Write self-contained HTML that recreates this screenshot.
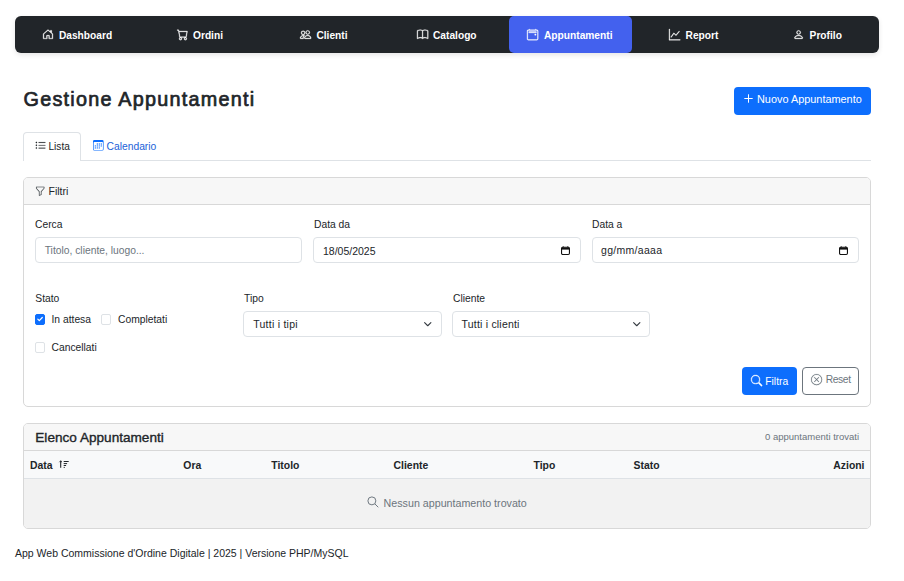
<!DOCTYPE html>
<html><head><meta charset="utf-8">
<style>
*{box-sizing:border-box;margin:0;padding:0}
html,body{width:904px;height:581px;overflow:hidden;background:#fff;font-family:"Liberation Sans",sans-serif;color:#212529}
.a{position:absolute}
.t{position:absolute;white-space:nowrap;line-height:1}
svg{position:absolute;overflow:visible}
#nav{left:15px;top:16px;width:864px;height:37px;background:#212529;border-radius:6px;box-shadow:0 2px 5px rgba(0,0,0,.1)}
#act{left:509px;top:16px;width:123px;height:37px;background:#4361ee;border-radius:5px}
.nt{font-weight:bold;font-size:10.2px;color:#fff}
.card{position:absolute;border:1px solid #d8d8d8;border-radius:5px;overflow:hidden;background:#fff}
.ch{position:absolute;left:0;right:0;top:0;background:#f7f7f7;border-bottom:1px solid #d8d8d8}
.inp{position:absolute;border:1px solid #dee2e6;border-radius:4px;background:#fff;height:26px;top:237px}
.lb{font-size:10.3px;color:#212529}
.cb{position:absolute;width:10.3px;height:10.6px;border:1px solid #dee2e6;border-radius:2px;background:#fff}
.th{font-weight:bold;font-size:10.4px;color:#212529}
</style></head><body>
<div id="nav" class="a"></div>
<div id="act" class="a"></div>

<!-- nav icons -->
<svg style="left:41.8px;top:29.2px" width="12" height="10.5" preserveAspectRatio="none" viewBox="0 0 16 16" fill="#fff" stroke="#fff" stroke-width="0.45"><path d="M8.354 1.146a.5.5 0 0 0-.708 0l-6 6A.5.5 0 0 0 1.5 7.5v7a.5.5 0 0 0 .5.5h4.5a.5.5 0 0 0 .5-.5v-4h2v4a.5.5 0 0 0 .5.5H14a.5.5 0 0 0 .5-.5v-7a.5.5 0 0 0-.146-.354L13 5.793V2.5a.5.5 0 0 0-.5-.5h-1a.5.5 0 0 0-.5.5v1.293zM2.5 14V7.707l5.5-5.5 5.5 5.5V14H10v-4a.5.5 0 0 0-.5-.5h-3a.5.5 0 0 0-.5.5v4z"/></svg>
<div class="t nt" style="left:58.9px;top:31.4px">Dashboard</div>
<svg style="left:177px;top:29.2px" width="11.2" height="11.2" viewBox="0 0 16 16" fill="#fff" stroke="#fff" stroke-width="0.45"><path d="M0 1.5A.5.5 0 0 1 .5 1H2a.5.5 0 0 1 .485.379L2.89 3H14.5a.5.5 0 0 1 .491.592l-1.5 8A.5.5 0 0 1 13 12H4a.5.5 0 0 1-.491-.408L2.01 3.607 1.61 2H.5a.5.5 0 0 1-.5-.5M3.102 4l1.313 7h8.17l1.313-7zM5 12a2 2 0 1 0 0 4 2 2 0 0 0 0-4m7 0a2 2 0 1 0 0 4 2 2 0 0 0 0-4m-7 1a1 1 0 1 1 0 2 1 1 0 0 1 0-2m7 0a1 1 0 1 1 0 2 1 1 0 0 1 0-2"/></svg>
<div class="t nt" style="left:193px;top:31.4px">Ordini</div>
<svg style="left:300px;top:29.2px" width="11.2" height="11.2" viewBox="0 0 16 16" fill="#fff" stroke="#fff" stroke-width="0.45"><path d="M15 14s1 0 1-1-1-4-5-4-5 3-5 4 1 1 1 1zm-7.978-1L7 12.996c.001-.264.167-1.03.76-1.72C8.312 10.629 9.282 10 11 10c1.717 0 2.687.63 3.24 1.276.593.69.758 1.457.76 1.72l-.008.002-.014.002zM11 7a2 2 0 1 0 0-4 2 2 0 0 0 0 4m3-2a3 3 0 1 1-6 0 3 3 0 0 1 6 0M6.936 9.28a6 6 0 0 0-1.23-.247A7 7 0 0 0 5 9c-4 0-5 3-5 4q0 1 1 1h4.216A2.240 2.240 0 0 1 5 13c0-1.010.377-2.042 1.090-2.904.243-.294.526-.569.846-.816M4.920 10A5.500 5.500 0 0 0 4 13H1c0-.260.164-1.030.760-1.724.545-.636 1.492-1.256 3.160-1.275zM1.500 5.500a3 3 0 1 1 6 0 3 3 0 0 1-6 0m3-2a2 2 0 1 0 0 4 2 2 0 0 0 0-4"/></svg>
<div class="t nt" style="left:316.4px;top:31.4px">Clienti</div>
<svg style="left:417px;top:29.2px" width="11.2" height="11.2" viewBox="0 0 16 16" fill="#fff" stroke="#fff" stroke-width="0.45"><path d="M1 2.828c.885-.37 2.154-.769 3.388-.893 1.33-.134 2.458.063 3.112.752v9.746c-.935-.53-2.12-.603-3.213-.493-1.18.12-2.37.461-3.287.811zm7.5-.141c.654-.689 1.782-.886 3.112-.752 1.234.124 2.503.523 3.388.893v9.923c-.918-.35-2.107-.692-3.287-.81-1.094-.111-2.278-.039-3.213.492zM8 1.783C7.015.936 5.587.81 4.287.94c-1.514.153-3.042.672-3.994 1.105A.5.5 0 0 0 0 2.5v11a.5.5 0 0 0 .707.455c.882-.4 2.303-.881 3.68-1.02 1.409-.142 2.59.087 3.223.877a.5.5 0 0 0 .78 0c.633-.79 1.814-1.019 3.222-.877 1.378.139 2.8.62 3.681 1.02A.5.5 0 0 0 16 13.5v-11a.5.5 0 0 0-.293-.455c-.952-.433-2.48-.952-3.994-1.105C10.413.809 8.985.936 8 1.783"/></svg>
<div class="t nt" style="left:433px;top:31.4px">Catalogo</div>
<svg style="left:527px;top:29.2px" width="11.2" height="11.2" viewBox="0 0 16 16" fill="#fff" stroke="#fff" stroke-width="0.45"><path d="M11 7.5a.5.5 0 0 1 .5-.5h1a.5.5 0 0 1 .5.5v1a.5.5 0 0 1-.5.5h-1a.5.5 0 0 1-.5-.5zM3.5 0a.5.5 0 0 1 .5.5V1h8V.5a.5.5 0 0 1 1 0V1h1a2 2 0 0 1 2 2v11a2 2 0 0 1-2 2H2a2 2 0 0 1-2-2V3a2 2 0 0 1 2-2h1V.5a.5.5 0 0 1 .5-.5M2 2a1 1 0 0 0-1 1v11a1 1 0 0 0 1 1h12a1 1 0 0 0 1-1V3a1 1 0 0 0-1-1zM2.5 4a.5.5 0 0 1 .5-.5h10a.5.5 0 0 1 .5.5v1a.5.5 0 0 1-.5.5H3a.5.5 0 0 1-.5-.5z"/></svg>
<div class="t nt" style="left:544px;top:31.4px">Appuntamenti</div>
<svg style="left:669px;top:29.2px" width="11.2" height="11.2" viewBox="0 0 16 16" fill="#fff" stroke="#fff" stroke-width="0.45"><path d="M0 0h1v15h15v1H0zm14.817 3.113a.5.5 0 0 1 .07.704l-4.5 5.5a.5.5 0 0 1-.74.037L7.06 6.767l-3.656 5.027a.5.5 0 0 1-.808-.588l4-5.5a.5.5 0 0 1 .758-.06l2.609 2.61 4.15-5.073a.5.5 0 0 1 .704-.07"/></svg>
<div class="t nt" style="left:685.6px;top:31.4px">Report</div>
<svg style="left:793px;top:29.2px" width="11.2" height="11.2" viewBox="0 0 16 16" fill="#fff" stroke="#fff" stroke-width="0.45"><path d="M8 8a3 3 0 1 0 0-6 3 3 0 0 0 0 6m2-3a2 2 0 1 1-4 0 2 2 0 0 1 4 0m4 8c0 1-1 1-1 1H3s-1 0-1-1 1-4 6-4 6 3 6 4m-1-.004c-.001-.246-.154-.986-.832-1.664C11.516 10.68 10.289 10 8 10s-3.516.68-4.168 1.332c-.678.678-.83 1.418-.832 1.664z"/></svg>
<div class="t nt" style="left:809.6px;top:31.4px">Profilo</div>

<!-- title -->
<div class="t" style="left:23.5px;top:89.5px;font-size:19.8px;letter-spacing:1.25px;-webkit-text-stroke:0.7px #212529;color:#212529">Gestione Appuntamenti</div>

<!-- Nuovo button -->
<div class="a" style="left:734px;top:87px;width:137px;height:28px;background:#0d6efd;border-radius:4px"></div>
<svg style="left:744px;top:94px" width="9" height="9" viewBox="0 0 9 9" fill="none" stroke="#fff" stroke-width="1"><path d="M4.5 0.3v8.4M0.3 4.5h8.4"/></svg>
<div class="t" style="left:757px;top:93.7px;font-size:10.9px;color:#fff">Nuovo Appuntamento</div>

<!-- tabs -->
<div class="a" style="left:23px;top:160px;width:848px;height:1px;background:#dee2e6"></div>
<div class="a" style="left:23px;top:132px;width:58px;height:29px;border:1px solid #dee2e6;border-bottom:none;border-radius:4px 4px 0 0;background:#fff"></div>
<svg style="left:34.7px;top:140.4px" width="11.2" height="11.2" viewBox="0 0 16 16" fill="#212529" stroke="#212529" stroke-width="0.2"><path d="M5 11.5a.5.5 0 0 1 .5-.5h9a.5.5 0 0 1 0 1h-9a.5.5 0 0 1-.5-.5m0-4a.5.5 0 0 1 .5-.5h9a.5.5 0 0 1 0 1h-9a.5.5 0 0 1-.5-.5m0-4a.5.5 0 0 1 .5-.5h9a.5.5 0 0 1 0 1h-9a.5.5 0 0 1-.5-.5m-3 1a1 1 0 1 0 0-2 1 1 0 0 0 0 2m0 4a1 1 0 1 0 0-2 1 1 0 0 0 0 2m0 4a1 1 0 1 0 0-2 1 1 0 0 0 0 2"/></svg>
<div class="t lb" style="left:48.5px;top:142.2px;font-size:10.1px;color:#212529">Lista</div>
<svg style="left:93px;top:140px" width="10.6" height="10.6" viewBox="0 0 16 16" fill="#0d6efd"><path d="M14 0H2a2 2 0 0 0-2 2v12a2 2 0 0 0 2 2h12a2 2 0 0 0 2-2V2a2 2 0 0 0-2-2M1 3.857C1 3.384 1.448 3 2 3h12c.552 0 1 .384 1 .857v10.286c0 .473-.448.857-1 .857H2c-.552 0-1-.384-1-.857zM6.5 7a1 1 0 1 0 0-2 1 1 0 0 0 0 2m3 0a1 1 0 1 0 0-2 1 1 0 0 0 0 2m3 0a1 1 0 1 0 0-2 1 1 0 0 0 0 2m-9 3a1 1 0 1 0 0-2 1 1 0 0 0 0 2m3 0a1 1 0 1 0 0-2 1 1 0 0 0 0 2m3 0a1 1 0 1 0 0-2 1 1 0 0 0 0 2m3 0a1 1 0 1 0 0-2 1 1 0 0 0 0 2m-9 3a1 1 0 1 0 0-2 1 1 0 0 0 0 2m3 0a1 1 0 1 0 0-2 1 1 0 0 0 0 2m3 0a1 1 0 1 0 0-2 1 1 0 0 0 0 2"/></svg>
<div class="t" style="left:106.5px;top:142.2px;font-size:10.3px;color:#2262d8">Calendario</div>

<!-- Filtri card -->
<div class="card" style="left:23px;top:177px;width:848px;height:230px">
  <div class="ch" style="height:27px"></div>
</div>
<svg style="left:35px;top:185.6px" width="10.4" height="10.4" viewBox="0 0 16 16" fill="#3a3f44" stroke="#3a3f44" stroke-width="0.1"><path d="M1.5 1.5A.5.5 0 0 1 2 1h12a.5.5 0 0 1 .5.5v2a.5.5 0 0 1-.128.334L10 8.692V13.5a.5.5 0 0 1-.342.474l-3 1A.5.5 0 0 1 6 14.5V8.692L1.628 3.834A.5.5 0 0 1 1.5 3.5zm1 .5v1.308l4.372 4.858A.5.5 0 0 1 7 8.5v5.306l2-.666V8.5a.5.5 0 0 1 .128-.334L13.5 3.308V2z"/></svg>
<div class="t lb" style="left:48.5px;top:186px;font-size:10.5px">Filtri</div>

<div class="t lb" style="left:35px;top:220.3px">Cerca</div>
<div class="t lb" style="left:314px;top:220.3px">Data da</div>
<div class="t lb" style="left:592px;top:220.3px">Data a</div>
<div class="inp" style="left:35px;width:267px"></div>
<div class="inp" style="left:313px;width:268px"></div>
<div class="inp" style="left:592px;width:267px"></div>
<div class="t" style="left:44.7px;top:246.3px;font-size:10.3px;color:#6c757d">Titolo, cliente, luogo...</div>
<div class="t" style="left:323px;top:245.8px;font-size:10.5px;color:#212529">18/05/2025</div>
<div class="t" style="left:601px;top:245px;font-size:10.5px;letter-spacing:0.3px;color:#212529">gg/mm/aaaa</div>
<svg style="left:561px;top:245.5px" width="9" height="9" viewBox="0 0 9 9" fill="none" stroke="#111" stroke-width="1.1"><rect x="0.55" y="1.2" width="7.9" height="7.3" rx="1.2"/><path d="M0.8 2.6h7.4" stroke-width="2"/><path d="M2.2 0.3v1.2M6.8 0.3v1.2" stroke-width="1"/></svg>
<svg style="left:839px;top:245.5px" width="9" height="9" viewBox="0 0 9 9" fill="none" stroke="#111" stroke-width="1.1"><rect x="0.55" y="1.2" width="7.9" height="7.3" rx="1.2"/><path d="M0.8 2.6h7.4" stroke-width="2"/><path d="M2.2 0.3v1.2M6.8 0.3v1.2" stroke-width="1"/></svg>

<div class="t lb" style="left:35.3px;top:293.5px">Stato</div>
<div class="t lb" style="left:244px;top:293.5px">Tipo</div>
<div class="t lb" style="left:453px;top:293.5px">Cliente</div>

<div class="cb" style="left:35px;top:314px;background:#0d6efd;border-color:#0d6efd"></div>
<svg style="left:35px;top:314.3px" width="10" height="10" viewBox="0 0 10 10" fill="none" stroke="#fff" stroke-width="1.2" stroke-linecap="round" stroke-linejoin="round"><path d="M2.8 5.2l1.5 1.5 3-3.2"/></svg>
<div class="t lb" style="left:51.5px;top:315.3px">In attesa</div>
<div class="cb" style="left:101.2px;top:314px"></div>
<div class="t lb" style="left:118px;top:315.3px">Completati</div>
<div class="cb" style="left:35px;top:342px"></div>
<div class="t lb" style="left:51.5px;top:343.1px">Cancellati</div>

<div class="inp" style="left:243px;top:311px;width:199px;height:26px"></div>
<div class="inp" style="left:452px;top:311px;width:198px;height:26px"></div>
<div class="t" style="left:253.2px;top:319px;font-size:10.5px;letter-spacing:0.25px;color:#212529">Tutti i tipi</div>
<div class="t" style="left:461.6px;top:319px;font-size:10.5px;letter-spacing:0.2px;color:#212529">Tutti i clienti</div>
<svg style="left:424px;top:322px" width="7.5" height="4.5" viewBox="0 0 7.5 4.5" fill="none" stroke="#343a40" stroke-width="1.1" stroke-linecap="round" stroke-linejoin="round"><path d="M0.6 0.6 3.75 3.75 6.9 0.6"/></svg>
<svg style="left:633px;top:322px" width="7.5" height="4.5" viewBox="0 0 7.5 4.5" fill="none" stroke="#343a40" stroke-width="1.1" stroke-linecap="round" stroke-linejoin="round"><path d="M0.6 0.6 3.75 3.75 6.9 0.6"/></svg>

<!-- Filtra / Reset -->
<div class="a" style="left:742px;top:367px;width:55px;height:28px;background:#0d6efd;border-radius:4px"></div>
<svg style="left:750.6px;top:374.5px" width="11.2" height="11.2" viewBox="0 0 16 16" fill="#fff" stroke="#fff" stroke-width="0.5"><path d="M11.742 10.344a6.5 6.5 0 1 0-1.397 1.398h-.001q.044.06.098.115l3.850 3.850a1 1 0 0 0 1.415-1.414l-3.850-3.850a1 1 0 0 0-.115-.1zM12 6.5a5.5 5.5 0 1 1-11 0 5.5 5.5 0 0 1 11 0"/></svg>
<div class="t" style="left:765.3px;top:376.5px;font-size:10.3px;color:#fff">Filtra</div>
<div class="a" style="left:802px;top:367px;width:57px;height:28px;border:1px solid #6c757d;border-radius:4px"></div>
<svg style="left:811.2px;top:373.8px" width="11.2" height="11.2" viewBox="0 0 16 16" fill="#6c757d" stroke="#6c757d" stroke-width="0.2"><path d="M8 15A7 7 0 1 1 8 1a7 7 0 0 1 0 14m0 1A8 8 0 1 0 8 0a8 8 0 0 0 0 16M4.646 4.646a.5.5 0 0 1 .708 0L8 7.293l2.646-2.647a.5.5 0 0 1 .708.708L8.707 8l2.647 2.646a.5.5 0 0 1-.708.708L8 8.707l-2.646 2.647a.5.5 0 0 1-.708-.708L7.293 8 4.646 5.354a.5.5 0 0 1 0-.708"/></svg>
<div class="t" style="left:825.7px;top:374.5px;font-size:10.3px;letter-spacing:-0.4px;color:#6c757d">Reset</div>

<!-- Elenco card -->
<div class="card" style="left:23px;top:423px;width:848px;height:106px">
  <div class="ch" style="height:27px"></div>
  <div class="a" style="left:0;right:0;top:27px;height:28px;background:#f8f9fa;border-bottom:1px solid #dee2e6"></div>
  <div class="a" style="left:0;right:0;top:55px;bottom:0;background:#f2f2f2"></div>
</div>
<div class="t" style="left:35.3px;top:430.9px;font-size:13.6px;-webkit-text-stroke:0.35px #212529;color:#212529">Elenco Appuntamenti</div>
<div class="t" style="left:765px;top:432px;font-size:9.5px;color:#6c757d">0 appuntamenti trovati</div>
<div class="t th" style="left:30px;top:461px">Data</div>
<svg style="left:58px;top:459px" width="12" height="10" viewBox="0 0 12 10" fill="none" stroke="#212529" stroke-width="1"><path d="M2.7 1.8V8.8" stroke-width="1.1"/><path d="M1.4 3.2 2.7 1.9 4 3.2" stroke-width="0.9"/><path d="M5.7 2.5h5M5.7 4.6h3.4M5.7 6.5h2.4M5.7 8.4h1.1"/></svg>
<div class="t th" style="left:183.3px;top:461px">Ora</div>
<div class="t th" style="left:271.3px;top:461px">Titolo</div>
<div class="t th" style="left:393.6px;top:461px">Cliente</div>
<div class="t th" style="left:533.5px;top:461px">Tipo</div>
<div class="t th" style="left:633.5px;top:461px">Stato</div>
<div class="t th" style="left:833.3px;top:461px">Azioni</div>
<svg style="left:366.5px;top:496px" width="12" height="12" viewBox="0 0 16 16" fill="none" stroke="#6c757d" stroke-width="1.3"><circle cx="6.5" cy="6.5" r="5.3"/><path d="M10.5 10.5 15 15"/></svg>
<div class="t" style="left:383.6px;top:498px;font-size:10.7px;color:#6c757d">Nessun appuntamento trovato</div>

<!-- footer -->
<div class="t" style="left:15px;top:548.4px;font-size:10.5px;color:#212529">App Web Commissione d'Ordine Digitale | 2025 | Versione PHP/MySQL</div>
</body></html>
